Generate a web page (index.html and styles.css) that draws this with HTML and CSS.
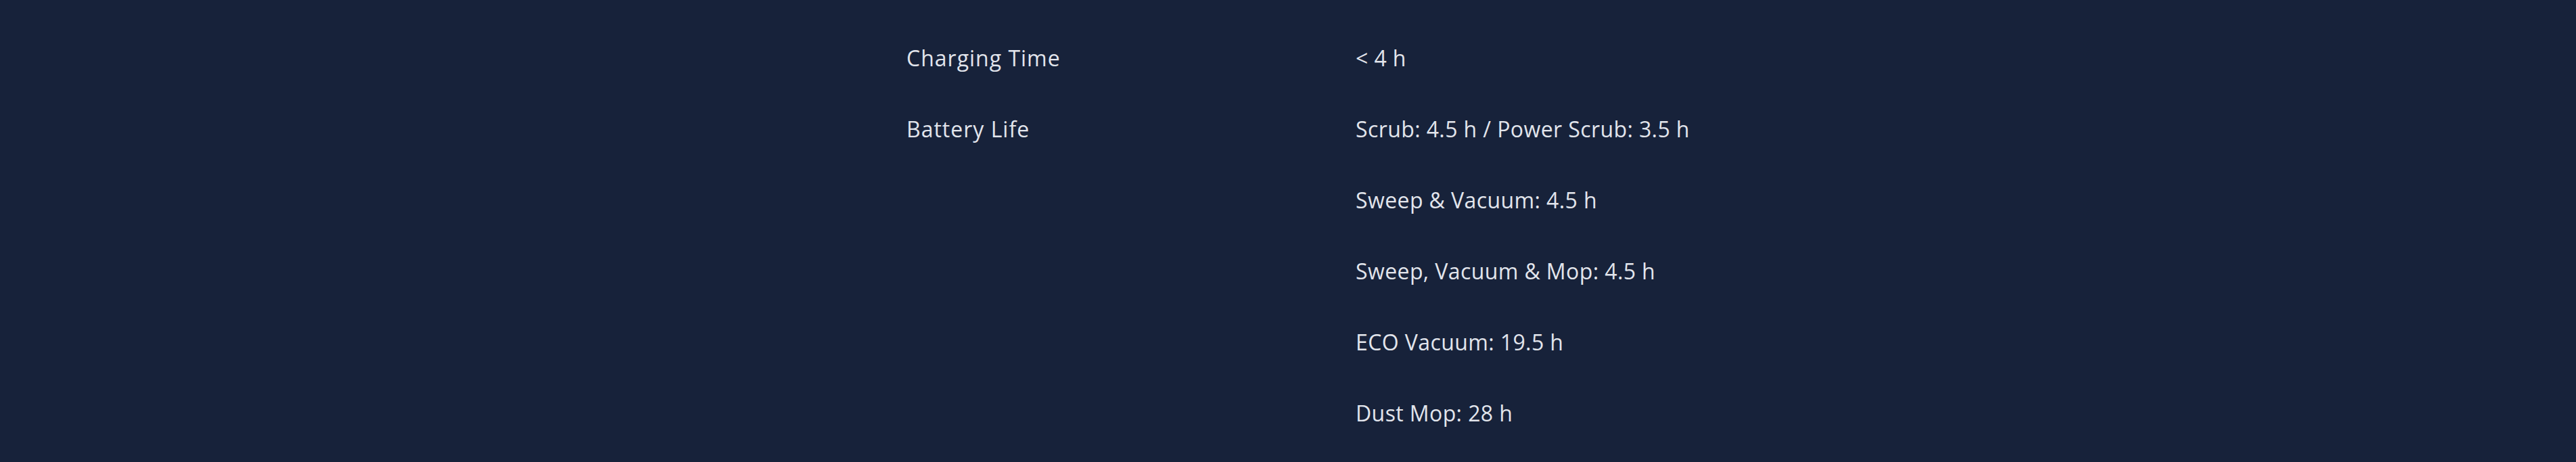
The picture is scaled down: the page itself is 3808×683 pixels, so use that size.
FILE: index.html
```html
<!DOCTYPE html>
<html lang="en">
<head>
    <meta charset="UTF-8">
    <meta name="viewport" content="width=device-width, initial-scale=1.0">
    <title>Specifications</title>
    <link rel="stylesheet" href="styles.css">
</head>
<body>
    <div class="specs">
        <!-- Charging -->
        <div class="spec-row">
            <div class="spec-label">Charging Time</div>
            <div class="spec-values">
                <p>&lt; 4 h</p>
            </div>
        </div>

        <!-- Battery -->
        <div class="spec-row">
            <div class="spec-label">Battery Life</div>
            <div class="spec-values">
                <p>Scrub: 4.5 h / Power Scrub: 3.5 h</p>
                <p>Sweep &amp; Vacuum: 4.5 h</p>
                <p>Sweep, Vacuum &amp; Mop: 4.5 h</p>
                <p>ECO Vacuum: 19.5 h</p>
                <p>Dust Mop: 28 h</p>
            </div>
        </div>
    </div>
</body>
</html>
```

FILE: styles.css
```css
body {
    font-family: 'Open Sans', 'Liberation Sans', sans-serif;
    margin: 0;
    padding: 0;
    background-color: #17223a;
    color: #e2e5ec;
    min-height: 100vh;
}

.specs {
    width: 1128px;
    margin: 0 auto;
    padding-top: 62px;
    display: flex;
    flex-direction: column;
    gap: 57px;
}

.spec-row {
    display: grid;
    grid-template-columns: 664px 1fr;
    font-size: 32px;
    line-height: 48px;
    letter-spacing: 0.4px;
}

.spec-label {
    white-space: nowrap;
    letter-spacing: 1px;
}

.spec-values {
    display: flex;
    flex-direction: column;
    gap: 57px;
}

.spec-values p {
    margin: 0;
    white-space: nowrap;
}
```
